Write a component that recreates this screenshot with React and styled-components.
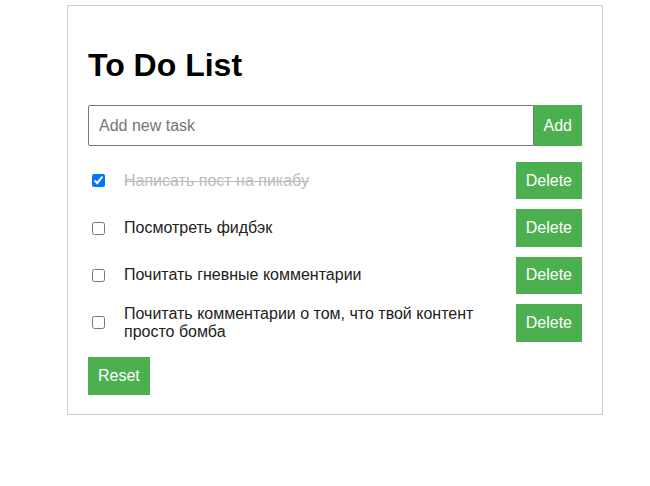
import React, { useState } from 'react';
import styled, { createGlobalStyle } from 'styled-components';

const initialTasks = [
    { id: 1, text: 'Написать пост на пикабу', done: true },
    { id: 2, text: 'Посмотреть фидбэк', done: false },
    { id: 3, text: 'Почитать гневные комментарии', done: false },
    { id: 4, text: 'Почитать комментарии о том, что твой контент просто бомба', done: false },
];

export default function App() {
    const [tasks, setTasks] = useState(initialTasks);
    const [value, setValue] = useState('');

    const handleAdd = () => {
        if (!value.trim()) return;
        setTasks([...tasks, { id: Date.now(), text: value.trim(), done: false }]);
        setValue('');
    };

    const toggle = (id) => {
        setTasks(tasks.map((t) => (t.id === id ? { ...t, done: !t.done } : t)));
    };

    const remove = (id) => {
        setTasks(tasks.filter((t) => t.id !== id));
    };

    return (
        <>
            <GlobalStyle />
            <Container>
                <Title>To Do List</Title>
                <InputRow>
                    <TaskInput
                        placeholder="Add new task"
                        value={value}
                        onChange={(e) => setValue(e.target.value)}
                    />
                    <Button $height="41px" onClick={handleAdd}>Add</Button>
                </InputRow>
                <List>
                    {tasks.map((task) => (
                        <Item key={task.id}>
                            <Checkbox
                                type="checkbox"
                                checked={task.done}
                                onChange={() => toggle(task.id)}
                            />
                            <TaskText $done={task.done}>{task.text}</TaskText>
                            <Button onClick={() => remove(task.id)}>Delete</Button>
                        </Item>
                    ))}
                </List>
                <Button $height="38px" onClick={() => setTasks(initialTasks)}>Reset</Button>
            </Container>
        </>
    );
}

const GlobalStyle = createGlobalStyle`
    body {
        margin: 0;
        background: #fff;
        font-family: "Liberation Sans", Arial, sans-serif;
    }
`;

const Container = styled.div`
    width: 494px;
    margin: 5px 0 0 67px;
    padding: 20px 20px 19px;
    border: 1px solid #ccc;
`;

const Title = styled.h1`
    margin: 21px 0;
    font-size: 32px;
    font-weight: 700;
    color: #000;
    line-height: 37px;
`;

const InputRow = styled.div`
    display: flex;
    height: 41px;
`;

const TaskInput = styled.input`
    flex: 1;
    box-sizing: border-box;
    height: 41px;
    padding: 0 10px;
    border: 1px solid #767676;
    border-radius: 2px 0 0 2px;
    font-family: "Liberation Sans", Arial, sans-serif;
    font-size: 16px;
    color: #222;
    outline: none;

    &::placeholder {
        color: #757575;
    }
`;

const Button = styled.button`
    box-sizing: border-box;
    height: ${(p) => p.$height || '37.4px'};
    padding: 0 10px;
    border: none;
    background: #4caf50;
    color: #fff;
    font-family: "Liberation Sans", Arial, sans-serif;
    font-size: 16px;
    cursor: pointer;
    flex-shrink: 0;
`;

const List = styled.ul`
    list-style: none;
    margin: 16px 0 15px;
    padding: 0;
    display: flex;
    flex-direction: column;
    gap: 10px;
`;

const Item = styled.li`
    display: flex;
    align-items: center;
    min-height: 37.4px;
`;

const Checkbox = styled.input`
    width: 13px;
    height: 13px;
    margin: 0 19px 0 4px;
    flex-shrink: 0;
`;

const TaskText = styled.span`
    flex: 1;
    margin-right: 10px;
    font-size: 16px;
    line-height: 18px;
    color: ${(p) => (p.$done ? '#bbb' : '#222')};
    text-decoration: ${(p) => (p.$done ? 'line-through' : 'none')};
`;
